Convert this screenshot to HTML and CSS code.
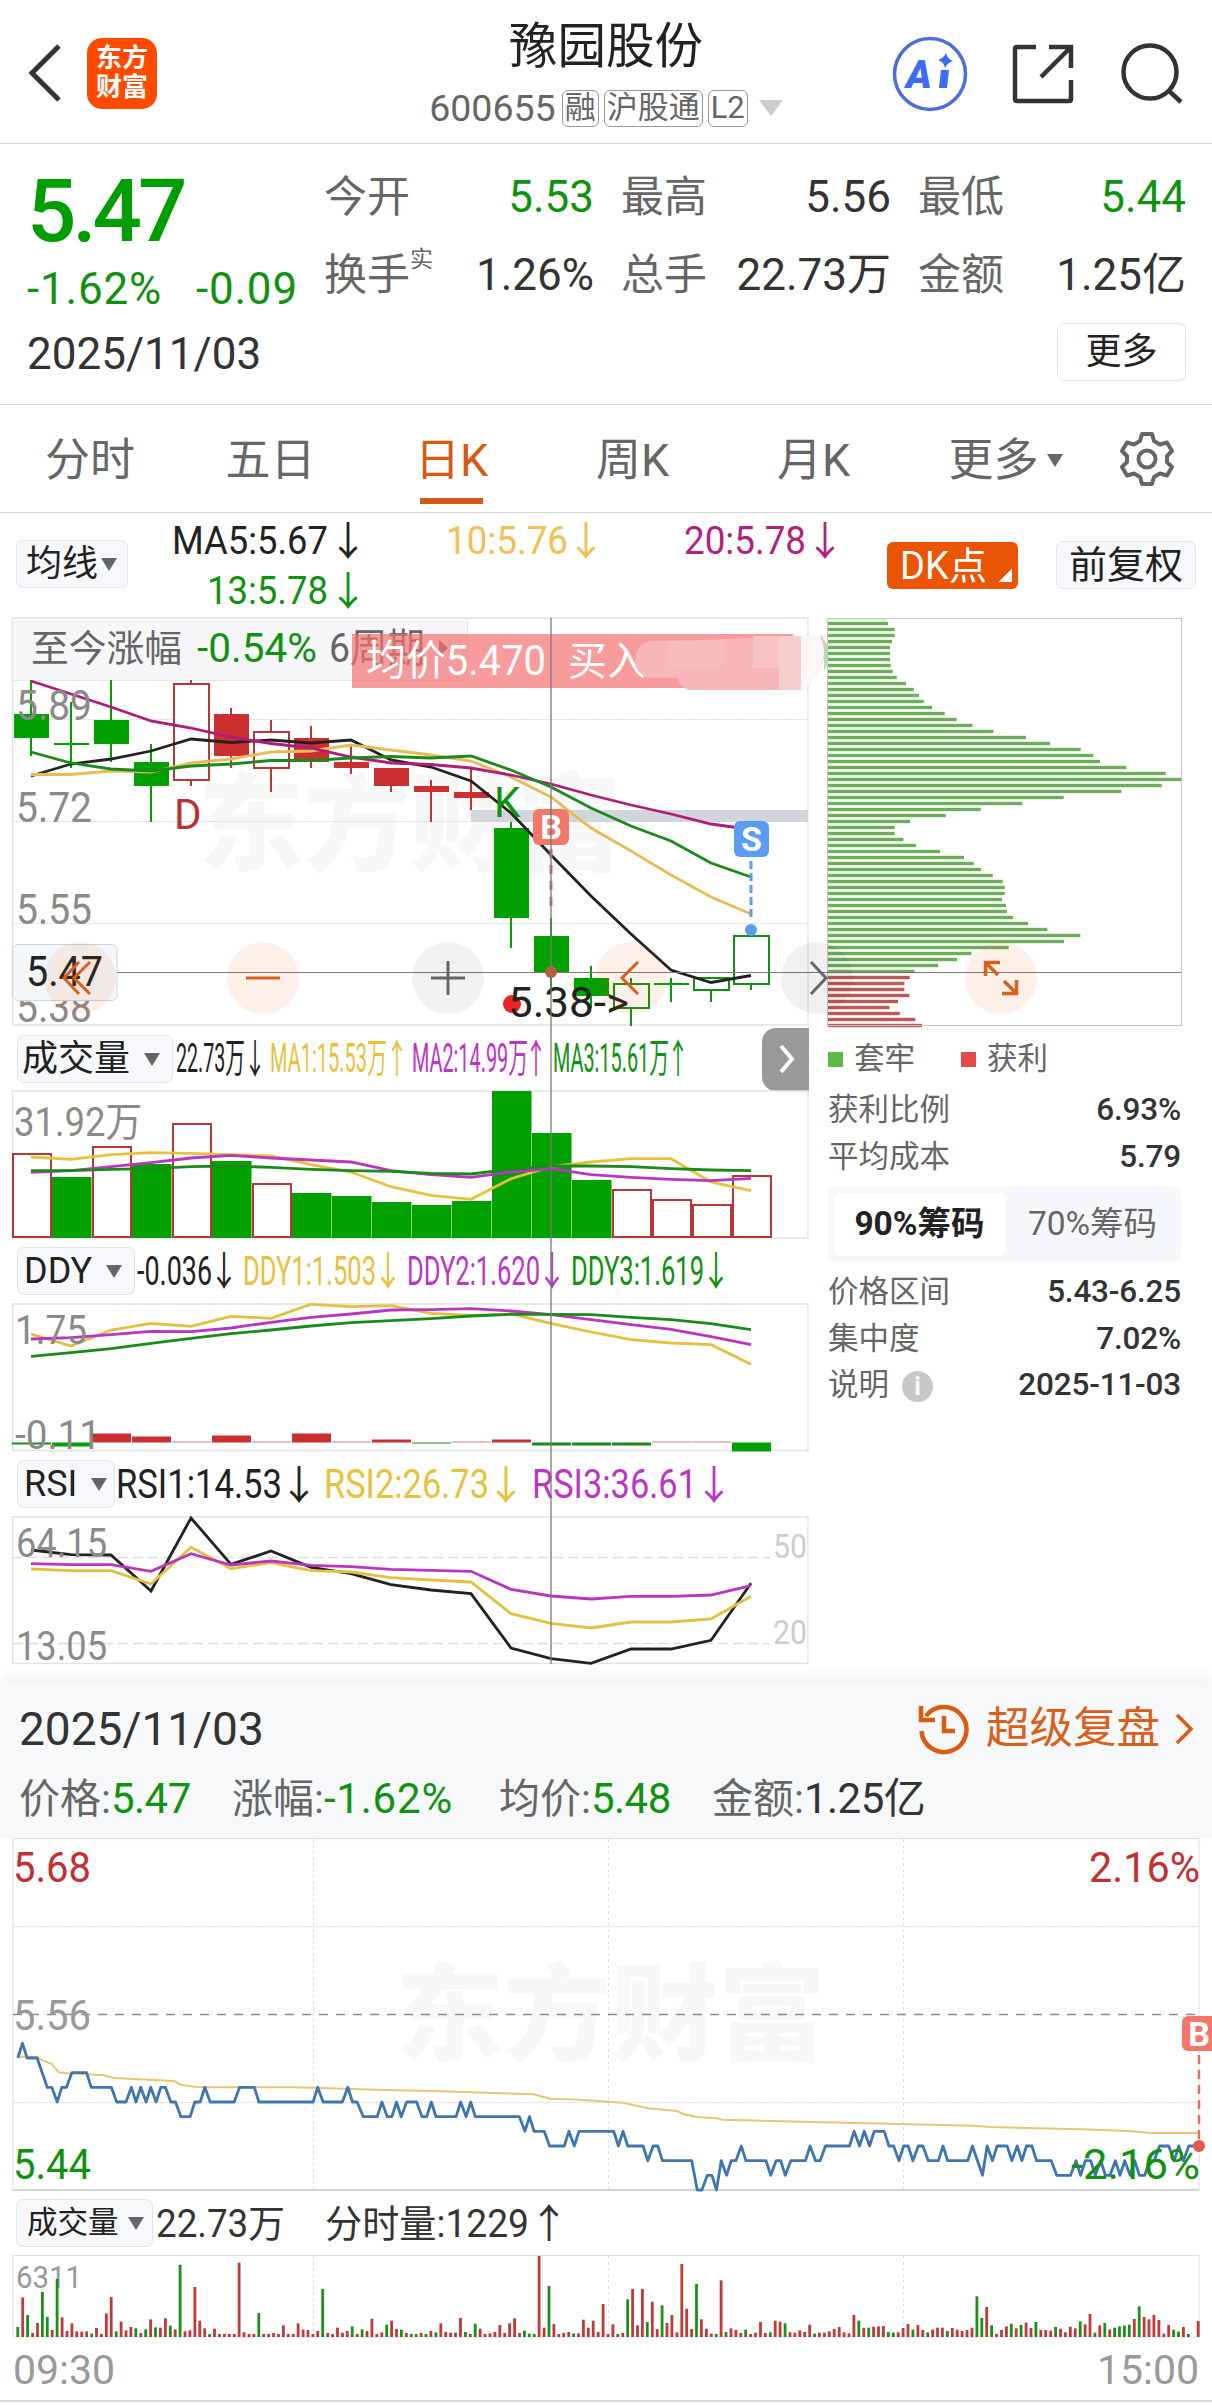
FILE: index.html
```html
<!DOCTYPE html>
<html lang="zh-CN">
<head>
  <meta charset="utf-8">
  <meta name="viewport" content="width=device-width, initial-scale=1">
  <title>豫园股份 600655</title>
  <link rel="stylesheet" href="styles.css">
</head>
<body>

<header class="topbar">
  <div class="topbar-left">
    <svg class="back" width="34" height="58" viewBox="0 0 34 58"><path d="M31 2 L4 29 L31 56" /></svg>
    <div class="logo"><span>东方</span><span>财富</span></div>
  </div>
  <div class="topbar-title">
    <h1>豫园股份</h1>
    <div class="code">
      <span class="num">600655</span>
      <span class="tag">融</span>
      <span class="tag">沪股通</span>
      <span class="tag">L2</span>
      <i class="tri tri-light"></i>
    </div>
  </div>
  <div class="topbar-right">
    <svg width="76" height="76" viewBox="0 0 76 76">
      <circle cx="38" cy="38" r="35.5" fill="none" stroke="#4a6fd8" stroke-width="3.5" />
      <text x="14" y="52" class="ai">A</text>
      <path d="M49 34 h8 l-2 18 h-8 z" fill="#3b6cf6" />
      <path d="M54 17 q1.500 6 7 8 q-6 2 -8 7 q-1 -6 -7 -8 q6 -2 8 -7 z" fill="#3b6cf6" />
    </svg>
    <svg class="line-icon" width="62" height="62" viewBox="0 0 62 62">
      <path d="M24 4 H5 Q3 4 3 6 V56 Q3 58 5 58 H57 Q59 58 59 56 V37 M37 4 H59 V25 M58 5 L29 34" />
    </svg>
    <svg class="line-icon" width="64" height="64" viewBox="0 0 64 64">
      <circle cx="30" cy="30" r="26.500" /><path d="M48 48 L61 60" />
    </svg>
  </div>
</header>

<section class="quote">
  <div class="quote-main">
    <div class="price">5.47</div>
    <div class="change"><span>-1.62%</span><span>-0.09</span></div>
    <div class="date">2025/11/03</div>
  </div>
  <div class="quote-side">
    <div class="quote-grid">
      <div class="cell"><span class="label">今开</span><span class="green">5.53</span></div>
      <div class="cell"><span class="label">最高</span><span>5.56</span></div>
      <div class="cell"><span class="label">最低</span><span class="green">5.44</span></div>
      <div class="cell"><span class="label">换手<sup>实</sup></span><span>1.26%</span></div>
      <div class="cell"><span class="label">总手</span><span>22.73万</span></div>
      <div class="cell"><span class="label">金额</span><span>1.25亿</span></div>
    </div>
    <button class="more">更多</button>
  </div>
</section>

<nav class="tabs">
  <a>分时</a>
  <a>五日</a>
  <a class="active">日K</a>
  <a>周K</a>
  <a>月K</a>
  <a class="tab-more">更多<i class="tri"></i></a>
  <a class="tab-gear">
    <svg width="56" height="56" viewBox="0 0 56 56">
      <path d="M23 3 H33 L35 10 L41 13.500 L48 11.500 L53 20 L48 25 V31 L53 36 L48 44.500 L41 42.500 L35 46 L33 53 H23 L21 46 L15 42.500 L8 44.500 L3 36 L8 31 V25 L3 20 L8 11.500 L15 13.500 L21 10 Z" />
      <circle cx="28" cy="28" r="8.500" />
    </svg>
  </a>
</nav>

<section class="ma-bar">
  <button class="chip-btn ma-btn">均线<i class="tri"></i></button>
  <svg class="ma-values" width="740" height="104" viewBox="130 513 740 104">
    <g class="t39 c-black"><text x="172" y="554" textLength="156">MA5:5.67</text><text class="arr" x="348" y="555">↓</text></g>
    <g class="t39 c-gold"><text x="446" y="554" textLength="122">10:5.76</text><text class="arr" x="586" y="555">↓</text></g>
    <g class="t39 c-plum"><text x="684" y="554" textLength="122">20:5.78</text><text class="arr" x="825" y="555">↓</text></g>
    <g class="t39 c-green"><text x="207" y="604" textLength="121">13:5.78</text><text class="arr" x="348" y="605">↓</text></g>
  </svg>
  <button class="dk-btn">DK点</button>
  <button class="chip-btn fq-btn">前复权</button>
</section>

<main class="charts">
  <svg id="kline" width="1212" height="411" viewBox="0 617 1212 411">
    <text class="watermark" x="198" y="862" textLength="424">东方财富</text>
    <rect class="frame" x="12.500" y="618" width="795.500" height="407" />
    <path class="dots" d="M13 719.500 H808 M13 821.500 H808 M13 923.500 H808" />
    <rect x="12.500" y="618" width="455" height="62.500" fill="#f7f7fa" stroke="#e6e6e8" />
    <text class="t38 c-gray" x="31" y="662" textLength="151">至今涨幅</text>
    <text class="t40 c-green" x="197" y="662" textLength="120">-0.54%</text>
    <text class="t40 c-gray" x="329" y="662" textLength="96">6周期</text>
    <path d="M439 640 L448 648 L439 656 Z" fill="#666" />
    <rect x="471" y="810" width="337" height="12" fill="#d2d6dc" />
    <g id="candles"></g>
    <g id="ma-lines"></g>
    <g class="t42 c-axis">
      <text x="16" y="720" textLength="76">5.89</text>
      <text x="16" y="822" textLength="76">5.72</text>
      <text x="16" y="924" textLength="76">5.55</text>
      <text x="16" y="1022" textLength="76">5.38</text>
    </g>
    <text class="t42" x="174" y="829" fill="#b83232">D</text>
    <text class="t42 c-green" x="494" y="817">K</text>

    <rect x="352" y="634" width="441" height="54" fill="#f47070" fill-opacity=".7" />
    <text class="t42" x="366" y="675" fill="#fff" textLength="180">均价5.470</text>
    <text class="t40" x="568" y="675" fill="#fff" textLength="78">买入</text>
    <path d="M650 641 Q720 640 790 636 H822 Q832 655 812 680 Q806 690 800 690 H690 Q680 688 677 678 H648 Q635 672 635 660 Q636 644 650 641 Z" fill="#f6b6ba" />
    <rect x="668" y="641" width="55" height="27" fill="#f6bbbd" />
    <rect x="753" y="636" width="26" height="32" fill="#f7c2c4" />
    <rect x="779" y="636" width="22" height="54" fill="#f8cdce" />
    <path d="M801 636 H820 Q831 656 812 680 Q806 690 801 690 Z" fill="#fcf6f6" />
    <path d="M824 639 Q834 655 824 671 Z" fill="#b5ddb0" />

    <rect x="13" y="944.500" width="104" height="56" rx="5" fill="#f5f8fb" stroke="#d0d4d8" />
    <text class="t42 c-black" x="26" y="986" textLength="77">5.47</text>

    <g id="chips"></g>
    <rect x="827.500" y="618.500" width="354" height="407" fill="none" stroke="#c8c8c8" />
    <path d="M117 972.500 H1181" stroke="#777" stroke-width="1.200" />

    <path d="M551 849 V906" stroke="#d0776c" stroke-width="3" stroke-dasharray="9 7" />
    <rect x="533" y="809" width="36" height="36" rx="6" fill="#f3776a" />
    <text class="badge" x="551" y="839">B</text>
    <circle cx="551" cy="972" r="6" fill="#bd5a40" />
    <path d="M751 861 V917" stroke="#5b9de8" stroke-width="3" stroke-dasharray="8 4" />
    <rect x="734" y="821" width="35" height="36" rx="6" fill="#5b9df5" />
    <text class="badge" x="751.500" y="851">S</text>
    <circle cx="751" cy="930" r="6" fill="#5b9df5" />
    <circle cx="512" cy="1004" r="9" fill="#ee2424" />
    <text class="t42 c-black" x="508" y="1017" textLength="121">5.38-&gt;</text>

    <!-- zoom and pan controls -->
    <g fill="#ea5504" fill-opacity=".09">
      <circle cx="80" cy="978" r="36" />
      <circle cx="263" cy="978" r="36" />
      <circle cx="631" cy="978" r="36" />
      <circle cx="1001" cy="978" r="36" />
    </g>
    <g fill="#000" fill-opacity=".055">
      <circle cx="448" cy="978" r="36" />
      <circle cx="817" cy="978" r="36" />
    </g>
    <g fill="none" stroke="#d95f1c" stroke-width="3">
      <path d="M79 962 L64 978 L79 994 M90 962 L74 978 L90 994" />
      <path d="M246 978 H280" />
      <path d="M638 962 L622 978 L638 994" />
      <path d="M985.500 976 V962.500 H1000 M986 963 L998 975" stroke-width="3.500" />
      <path d="M1016.500 980 V993.500 H1002 M1016 993 L1004 981" stroke-width="3.500" />
    </g>
    <path d="M431 978 H465 M448 961 V995 M811 962 L826 978 L811 994" fill="none" stroke="#666" stroke-width="3" />
  </svg>

  <div class="lower">
    <div class="indicators">
      <div class="ind-row">
        <button class="chip-btn">成交量<i class="tri"></i></button>
        <svg width="580" height="62" viewBox="175 1028 580 62">
          <g class="t40 c-black"><text x="176" y="1072" textLength="69">22.73万</text><text class="arr" x="255" y="1073" textLength="22">↓</text></g>
          <g class="t40 c-yellow"><text x="270" y="1072" textLength="117">MA1:15.53万</text><text class="arr" x="397" y="1073" textLength="22">↑</text></g>
          <g class="t40 c-magenta"><text x="412" y="1072" textLength="116">MA2:14.99万</text><text class="arr" x="536" y="1073" textLength="22">↑</text></g>
          <g class="t40 c-green"><text x="553" y="1072" textLength="116">MA3:15.61万</text><text class="arr" x="678" y="1073" textLength="22">↑</text></g>
        </svg>
        <button class="next"><svg width="20" height="34" viewBox="0 0 20 34"><path d="M5 4 L16 17 L5 30" /></svg></button>
      </div>
      <svg id="volume" width="820" height="149" viewBox="0 1090 820 149">
        <rect class="frame" x="12.500" y="1091" width="795.500" height="147" />
        <g id="vol-bars"></g>
        <text class="t40 c-axis" x="14" y="1136" textLength="128">31.92万</text>
        <g id="vol-lines"></g>
      </svg>

      <div class="ind-row h64">
        <button class="chip-btn ddy-btn">DDY<i class="tri"></i></button>
        <svg width="600" height="64" viewBox="137 1239 600 64">
          <g class="t40 c-black"><text x="137" y="1285" textLength="75">-0.036</text><text class="arr" x="224" y="1285" textLength="30">↓</text></g>
          <g class="t40 c-yellow"><text x="243" y="1285" textLength="133">DDY1:1.503</text><text class="arr" x="388" y="1285" textLength="30">↓</text></g>
          <g class="t40 c-magenta"><text x="407" y="1285" textLength="133">DDY2:1.620</text><text class="arr" x="552" y="1285" textLength="30">↓</text></g>
          <g class="t40 c-green"><text x="571" y="1285" textLength="133">DDY3:1.619</text><text class="arr" x="716" y="1285" textLength="30">↓</text></g>
        </svg>
      </div>
      <svg id="ddy" width="820" height="149" viewBox="0 1303 820 149">
        <rect class="frame" x="12.500" y="1304" width="795.500" height="146.500" />
        <g id="ddy-bars"></g>
        <g id="ddy-lines"></g>
        <g class="t40 c-axis">
          <text x="15" y="1344" textLength="72">1.75</text>
          <text x="15" y="1449" textLength="86">-0.11</text>
        </g>
      </svg>

      <div class="ind-row h64">
        <button class="chip-btn rsi-btn">RSI<i class="tri"></i></button>
        <svg width="620" height="64" viewBox="117 1452 620 64">
          <g class="t40 c-black"><text x="116" y="1498" textLength="166">RSI1:14.53</text><text class="arr" x="299" y="1499">↓</text></g>
          <g class="t40 c-yellow"><text x="324" y="1498" textLength="165">RSI2:26.73</text><text class="arr" x="506" y="1499">↓</text></g>
          <g class="t40 c-magenta"><text x="532" y="1498" textLength="165">RSI3:36.61</text><text class="arr" x="714" y="1499">↓</text></g>
        </svg>
      </div>
      <svg id="rsi" width="820" height="149" viewBox="0 1516 820 149">
        <rect class="frame" x="12.500" y="1517" width="795.500" height="146.500" />
        <path d="M13 1557.500 H770 M13 1643.500 H770" stroke="#ddd" stroke-width="1.500" stroke-dasharray="10 5" />
        <g id="rsi-lines"></g>
        <g class="t40 c-axis">
          <text x="16" y="1557" textLength="91">64.15</text>
          <text x="16" y="1660" textLength="91">13.05</text>
        </g>
        <g class="t34" fill="#ccc">
          <text x="773" y="1558" textLength="34">50</text>
          <text x="773" y="1644" textLength="34">20</text>
        </g>
      </svg>
    </div>

    <aside class="chips-info">
      <div class="legend">
        <span><i class="sq sq-green"></i>套牢</span>
        <span><i class="sq sq-red"></i>获利</span>
      </div>
      <div class="info-row"><span>获利比例</span><b>6.93%</b></div>
      <div class="info-row"><span>平均成本</span><b>5.79</b></div>
      <div class="segment"><b class="on">90%筹码</b><span>70%筹码</span></div>
      <div class="info-row"><span>价格区间</span><b>5.43-6.25</b></div>
      <div class="info-row"><span>集中度</span><b>7.02%</b></div>
      <div class="info-row"><span>说明<i class="info">i</i></span><b>2025-11-03</b></div>
    </aside>
  </div>
  <div class="crosshair"></div>
</main>

<section class="review">
  <div class="review-head">
    <span class="review-date">2025/11/03</span>
    <a class="replay">
      <svg width="54" height="54" viewBox="0 0 54 54">
        <path d="M9 14 A22.500 22.500 0 1 1 4.500 29" /><path d="M4 4 V18 H18" /><path d="M27 14 V29 H38" />
      </svg>
      <span>超级复盘</span>
      <svg class="arrow" width="22" height="34" viewBox="0 0 22 34"><path d="M4 3 L18 17 L4 31" /></svg>
    </a>
  </div>
  <div class="review-stats">
    <span>价格:<em class="green">5.47</em></span>
    <span>涨幅:<em class="green wide">-1.62%</em></span>
    <span>均价:<em class="green">5.48</em></span>
    <span>金额:<em>1.25亿</em></span>
  </div>
</section>

<svg id="minute" width="1212" height="354" viewBox="0 1838 1212 354">
  <text class="watermark" x="396" y="2052" textLength="430">东方财富</text>
  <rect class="frame thin" x="13" y="1838.500" width="1186" height="351.500" />
  <path class="dots" d="M13 1926.500 H1199 M13 2102.500 H1199" />
  <path class="vdots" d="M313.500 1839 V2190 M608.500 1839 V2190 M903.500 1839 V2190" />
  <path d="M13 2190 H1199" stroke="#d4d4d4" stroke-width="2" />
  <path d="M13 2014.500 H1199" stroke="#8a8a8a" stroke-width="1.500" stroke-dasharray="9 8" />
  <g id="minute-lines"></g>
  <g class="t42">
    <text x="13" y="1882" textLength="78" fill="#c03030">5.68</text>
    <text x="1089" y="1882" textLength="111" fill="#c03030">2.16%</text>
    <text x="13" y="2030" textLength="78" fill="#999">5.56</text>
    <text x="13" y="2179" textLength="78" class="c-green">5.44</text>
    <text x="1071" y="2179" textLength="129" class="c-green">-2.16%</text>
  </g>
  <path d="M1199 2055 V2142" stroke="#dd7060" stroke-width="2.500" stroke-dasharray="9 6" />
  <rect x="1182" y="2016" width="36" height="35" rx="6" fill="#f3776a" />
  <text class="badge" x="1199" y="2046">B</text>
  <circle cx="1199" cy="2146" r="6" fill="#e8584a" />
</svg>

<div class="ind-row minute-row">
  <button class="chip-btn small">成交量<i class="tri"></i></button>
  <svg width="420" height="62" viewBox="155 2192 420 62">
    <g class="t39 c-dark">
      <text x="156" y="2237" textLength="129">22.73万</text>
      <text x="325" y="2237" textLength="204">分时量:1229</text>
      <text class="arr" x="549" y="2238">↑</text>
    </g>
  </svg>
</div>

<svg id="minute-vol" width="1212" height="84" viewBox="0 2254 1212 84">
  <rect class="frame thin" x="13" y="2255.500" width="1186" height="81.500" />
  <path class="vdots" d="M313.500 2256 V2337 M608.500 2256 V2337 M903.500 2256 V2337" />
  <text class="t31" x="16" y="2288" textLength="66" fill="#999">6311</text>
  <g id="minute-bars"></g>
</svg>

<footer class="time-axis"><span>09:30</span><span>15:00</span></footer>

<script src="script.js"></script>
</body>
</html>
```
FILE: styles.css
```css
* {
  box-sizing: border-box;
}
body {
  margin: 0;
  width: 1212px;
  height: 2405px;
  overflow: hidden;
  background: #fff;
  color: #333;
  font-family: Roboto, "Liberation Sans", "Noto Sans CJK SC", sans-serif;
}
svg {
  display: block;
  flex: none;
}
button {
  margin: 0;
  padding: 0;
  font-family: inherit;
  color: #222;
}
i, em {
  font-style: normal;
}
.green {
  color: #109210;
}
.tri {
  display: inline-block;
  border: 8px solid transparent;
  border-top: 13px solid #666;
  border-bottom: 0;
}
.tri-light {
  border-width: 16px 12px 0;
  border-top-color: #ccc;
}



.topbar {
  display: grid;
  grid-template-columns: 400px 1fr 400px;
  height: 144px;
  border-bottom: 1px solid #d8d8d8;
}
.topbar-left {
  display: flex;
  align-items: center;
  padding: 3px 0 0 28px;
}
.back {
  fill: none;
  stroke: #333;
  stroke-width: 5;
}
.logo {
  display: flex;
  flex-direction: column;
  align-items: center;
  justify-content: center;
  width: 70px;
  height: 71px;
  margin-left: 25px;
  border-radius: 15px;
  background: #ff4a00;
  color: #fff;
  font-size: 26px;
  font-weight: 700;
  line-height: 29px;
}
.topbar-title {
  text-align: center;
}
.topbar-title h1 {
  margin: 17px 0 0;
  font-size: 48.500px;
  font-weight: 400;
  line-height: 60px;
  color: #222;
}
.code {
  display: flex;
  align-items: center;
  justify-content: center;
  gap: 5px;
  height: 38px;
  margin-top: 12px;
  color: #666;
}
.code .num {
  font-size: 37.500px;
  margin-right: 1px;
}
.tag {
  height: 37px;
  padding: 0 2px;
  border: 1.500px solid #999;
  border-radius: 6px;
  font-size: 31px;
  line-height: 34px;
}
.code .tri {
  margin-left: 6px;
}
.topbar-right {
  display: flex;
  align-items: center;
  padding: 4px 0 0 80px;
}
.topbar-right svg + svg {
  margin-left: 44px;
}
.topbar-right svg + svg + svg {
  margin-left: 46px;
}
.line-icon {
  fill: none;
  stroke: #333;
  stroke-width: 4.500;
}
.ai {
  font-size: 39px;
  font-weight: 900;
  font-style: italic;
  fill: #3b6cf6;
}



.quote {
  display: flex;
  height: 261px;
  border-bottom: 1px solid #d8d8d8;
  font-size: 44px;
}
.quote-main {
  width: 324px;
  padding: 18px 0 0 27px;
}
.price {
  line-height: 98px;
  font-size: 87px;
  font-weight: 500;
  letter-spacing: -4px;
  color: #009e00;
}
.change {
  display: flex;
  gap: 34px;
  line-height: 58px;
  letter-spacing: .8px;
  color: #109210;
}
.date {
  line-height: 72px;
}
.quote-side {
  display: flex;
  flex-direction: column;
  align-items: flex-end;
  width: 862px;
  padding-top: 14px;
}
.quote-grid {
  display: grid;
  grid-template-columns: 270px 270px 268px;
  column-gap: 27px;
  width: 862px;
}
.cell {
  display: flex;
  justify-content: space-between;
  line-height: 78px;
  white-space: nowrap;
}
.cell .label {
  font-size: 43px;
  color: #666;
}
.cell sup {
  font-size: 23px;
  line-height: 1;
  vertical-align: 23px;
}
.more {
  width: 129px;
  height: 58px;
  margin-top: 9px;
  border: 1.500px solid #e4e4e4;
  border-radius: 7px;
  background: #fff;
  font-size: 36px;
  line-height: 50px;
}



.tabs {
  display: flex;
  height: 108px;
  border-bottom: 1px solid #d4d4d4;
  font-size: 45px;
  line-height: 111px;
  color: #666;
}
.tabs a {
  width: 181px;
  text-align: center;
}
.tabs a:first-child {
  width: 180px;
}
.tabs a.active {
  color: #d75a14;
  background: linear-gradient(#d75a14, #d75a14) 59px 93px / 63px 6px no-repeat;
}
.tabs a.tab-more {
  width: 203px;
}
.tab-more .tri {
  margin: 0 0 9px 8px;
}
.tabs a.tab-gear {
  width: 80px;
  padding: 26px 0 0 12px;
}
.tab-gear svg {
  fill: none;
  stroke: #666;
  stroke-width: 4;
  stroke-linejoin: round;
}



.ma-bar {
  display: flex;
  height: 104px;
  padding-left: 16px;
}
.chip-btn {
  display: flex;
  align-items: center;
  height: 48px;
  padding: 0 8px 0 4px;
  border: 1.500px solid #e2e4e8;
  border-radius: 7px;
  background: #f6f8fb;
  font-size: 36px;
  line-height: 44px;
  white-space: nowrap;
}
.ma-btn {
  width: 112px;
  margin-top: 27px;
  padding-left: 9px;
}
.ma-btn .tri {
  margin-left: 3px;
}
.ma-values {
  margin-left: 2px;
}
.dk-btn {
  width: 131px;
  height: 47px;
  margin: 29px 0 0 17px;
  padding-right: 18px;
  border: 0;
  border-radius: 6px;
  background: linear-gradient(135deg, transparent 50%, #fff 50%) 112px 27px / 13px 13px no-repeat #ea5504;
  color: #fff;
  font-size: 38px;
  line-height: 44px;
}
.fq-btn {
  width: 140px;
  margin: 28px 0 0 38px;
  padding: 0 0 0 12px;
  font-size: 38px;
}



/* svg text */
.t31 { font-size: 31px; }
.t34 { font-size: 34px; }
.t38 { font-size: 37px; }
.t39 { font-size: 38px; }
.t40 { font-size: 40px; }
.t42 { font-size: 42px; }
.c-black { fill: #222; }
.c-dark { fill: #333; }
.c-gray { fill: #666; }
.c-axis { fill: #8a8a8a; }
.c-green { fill: #109210; }
.c-gold { fill: #efc052; }
.c-plum { fill: #b3207a; }
.c-yellow { fill: #e6c23c; }
.c-magenta { fill: #bc36c4; }
.arr {
  font-family: "Noto Sans CJK SC", sans-serif;
  font-size: 40px;
  text-anchor: middle;
}
.watermark {
  font-size: 106px;
  font-weight: 900;
  fill: #f7f7f7;
}
.badge {
  font-size: 34px;
  font-weight: 700;
  fill: #fff;
  text-anchor: middle;
}
.frame {
  fill: none;
  stroke: #e2e2e4;
  stroke-width: 1.500;
}
.frame.thin {
  stroke: #dcdee2;
  stroke-width: 1;
}
.dots {
  fill: none;
  stroke: #ddd;
  stroke-dasharray: 2 1;
}
.vdots {
  fill: none;
  stroke: #ddd;
  stroke-dasharray: 3 3;
}



.charts {
  position: relative;
  height: 1065px;
}
.crosshair {
  position: absolute;
  left: 550px;
  top: 1px;
  width: 2px;
  height: 1046px;
  background: rgba(120, 120, 120, .65);
}
.lower {
  display: flex;
}
.indicators {
  width: 820px;
}
.ind-row {
  display: flex;
  align-items: center;
  height: 62px;
  padding-left: 17px;
}
.ind-row.h64 {
  height: 64px;
}
.ind-row .chip-btn {
  flex: none;
  width: 156px;
  margin-right: 2px;
}
.ind-row .ddy-btn {
  width: 118px;
  padding-left: 6px;
}
.ind-row .rsi-btn {
  width: 98px;
  padding-left: 6px;
}
.ind-row .tri {
  margin-left: 14px;
}
.next {
  display: flex;
  align-items: center;
  justify-content: center;
  width: 47px;
  height: 63px;
  margin-left: 7px;
  border: 0;
  border-radius: 14px 0 0 14px;
  background: #999;
}
.next path {
  fill: none;
  stroke: #fff;
  stroke-width: 4;
}
.chips-info {
  width: 353px;
  margin-left: 8px;
  font-size: 30.500px;
  color: #666;
}
.legend {
  display: flex;
  height: 59px;
  padding-top: 3px;
  line-height: 58px;
}
.legend span {
  display: flex;
  align-items: center;
  width: 133px;
}
.sq {
  width: 15px;
  height: 15px;
  margin-right: 11px;
}
.sq-green { background: #5cb947; }
.sq-red { background: #e54a4a; }
.info-row {
  display: flex;
  justify-content: space-between;
  height: 46.500px;
  line-height: 46.500px;
}
.info-row b {
  font-weight: 500;
  font-size: 31.500px;
  letter-spacing: -.2px;
  color: #333;
}
.info {
  display: inline-block;
  width: 31px;
  height: 31px;
  margin-left: 13px;
  border-radius: 50%;
  background: #c8c8c8;
  color: #fff;
  font-size: 25px;
  font-weight: 700;
  line-height: 31px;
  text-align: center;
}
.segment {
  display: flex;
  height: 75px;
  margin: 7px 0 7px;
  padding: 6px;
  border-radius: 6px;
  background: #f6f7fa;
  font-size: 33.500px;
  line-height: 62px;
  text-align: center;
}
.segment b {
  width: 171px;
  border-radius: 6px;
  background: #fff;
  color: #222;
}
.segment span {
  flex: 1;
  padding-left: 5px;
}



.review {
  height: 156px;
  padding: 17px 17px 0 19px;
  background: #f7f8fa;
  box-shadow: 0 -6px 14px rgba(0, 0, 0, .06);
}
.review-head {
  display: flex;
  justify-content: space-between;
  height: 60px;
  line-height: 60px;
  font-size: 46px;
}
.replay {
  display: flex;
  align-items: center;
  font-size: 43.500px;
  color: #d8601c;
}
.replay span {
  margin: 0 13px 0 15px;
}
.replay svg {
  fill: none;
  stroke: #dc5a14;
  stroke-width: 4.500;
}
.replay .arrow {
  stroke-width: 3.500;
}
.review-stats {
  display: grid;
  grid-template-columns: 213px 267px 213px auto;
  line-height: 80px;
  font-size: 41px;
  color: #666;
}
.review-stats em {
  font-size: 42px;
  letter-spacing: -.5px;
  color: #333;
}
.review-stats em.green {
  color: #109210;
}
.review-stats em.wide {
  letter-spacing: .8px;
}
.ind-row .small {
  width: 137px;
  padding: 0 0 0 10px;
  font-size: 30.500px;
}
.minute-row {
  padding-left: 16px;
}
.minute-row .tri {
  margin-left: 9px;
}
.time-axis {
  display: flex;
  justify-content: space-between;
  height: 64px;
  padding: 0 13px;
  border-bottom: 2px solid #d8dcde;
  color: #999;
  font-size: 41px;
  line-height: 64px;
}
```
FILE: script.js
```js
const NS = "http://www.w3.org/2000/svg";
const RED = "#cc2f2f", GREEN = "#00a000";

// add a shape to a group
function add(id, tag, attrs) {
  const el = document.createElementNS(NS, tag);
  for (const k in attrs) el.setAttribute(k, attrs[k]);
  document.getElementById(id).append(el);
}

function rect(id, x, y, w, h, fill) {
  add(id, "rect", { x: x, y: y, width: w, height: h, fill: fill });
}

function hollow(id, x, y, w, h, stroke) {
  add(id, "rect", { x: x + 1, y: y + 1, width: w - 2, height: h - 2, fill: "#fff", stroke: stroke, "stroke-width": 2 });
}

// one point every 40px, y = top + v / scale
function line(id, values, color, top, scale) {
  const pts = values.map((v, i) => (31 + i * 40) + "," + (top + v / scale).toFixed(1)).join(" ");
  add(id, "polyline", { points: pts, fill: "none", stroke: color, "stroke-width": 2.8 });
}

// squeeze the svg labels to their column
document.querySelectorAll("text[textLength]").forEach(t => t.setAttribute("lengthAdjust", "spacingAndGlyphs"));

// candles: color, filled, body top, body bottom, wick top, wick bottom
const candles = [
  ["g", 1, 714, 738, 680, 756], ["g", 1, 743, 745, 702, 768], ["g", 1, 720, 744, 680, 762],
  ["g", 1, 762, 786, 744, 822], ["r", 0, 683, 781, 680, 786], ["r", 1, 714, 756, 708, 768],
  ["r", 0, 731, 769, 720, 792], ["r", 1, 738, 762, 726, 768], ["r", 1, 762, 768, 744, 774],
  ["r", 1, 768, 786, 768, 792], ["r", 1, 786, 792, 780, 822], ["r", 1, 792, 798, 768, 810],
  ["g", 1, 828, 918, 822, 948], ["g", 1, 936, 972, 918, 990], ["g", 1, 978, 996, 966, 1008],
  ["g", 0, 983, 1009, 978, 1026], ["g", 1, 983, 985, 978, 1002], ["g", 0, 977, 991, 977, 1002],
  ["g", 0, 935, 985, 931, 990]
];
candles.forEach((c, i) => {
  const x = 31 + i * 40;
  const color = c[0] == "g" ? (c[1] ? GREEN : "#109210") : (c[1] ? RED : "#b83838");
  rect("candles", x - 1, c[4], 2, c[5] - c[4], color);
  if (c[1]) rect("candles", x - 17, c[2], 35, c[3] - c[2], color);
  else hollow("candles", x - 18, c[2], 37, c[3] - c[2], color);
});
line("ma-lines", [776, 764, 759, 751, 739, 742.5, 740, 743, 740, 760, 767, 781, 813, 855, 896, 934, 970, 982.5, 975.5], "#222", 0, 1);
line("ma-lines", [774.5, 774.5, 771, 772, 763, 759, 752, 751, 745, 750, 755, 761, 777, 797, 828, 851, 875, 897, 914], "#e8bc55", 0, 1);
line("ma-lines", [681, 694, 707, 721, 728, 737, 743.5, 748, 757, 763, 764.5, 768, 775, 784, 795, 805, 814, 824, 829.5], "#b01c78", 0, 1);
line("ma-lines", [752, 763, 769, 771, 766, 764, 760.5, 760.5, 758, 756.5, 758, 756, 770, 787, 808, 826, 841, 863, 877], "#1a8a1a", 0, 1);

// chip distribution, last nine rows are in profit
const chips = [228, 234, 254, 254, 246, 240, 240, 240, 242, 248, 260, 288, 311, 327, 341, 366, 404, 440, 487, 550,
  648, 720, 812, 850, 870, 949, 1067, 1113, 1055, 934, 761, 637, 512, 407, 300, 254, 254, 280, 318, 390, 462, 491,
  513, 548, 578, 584, 584, 576, 588, 590, 609, 654, 712, 811, 762, 596, 484, 441, 384, 313,
  299, 283, 283, 298, 264, 238, 269, 316, 336];
chips.forEach((v, i) => {
  const y = 616 + i * 6, w = (v - 54) / 3;
  rect("chips", 828, Math.max(618, y - 1), w, 5, i < 60 ? "#ddf6d4" : "#fddcdc");
  rect("chips", 828, Math.max(618, y), w, i ? 3 : 1, i < 60 ? "#70ab62" : "#b95a5a");
});

// volume
const vol = "r1153 g1177 r1146 g1164 r1123 g1161 r1183 g1193 g1196 g1202 g1205 g1201 g1091 g1133 g1180 r1189 r1199 r1204 r1175";
vol.split(" ").forEach((s, i) => {
  const y = +s.slice(1), x = 12 + i * 40;
  if (s[0] == "g") rect("vol-bars", x, y, 39.5, 1238 - y, GREEN);
  else hollow("vol-bars", x, y, 40, 1238 - y, "#b83838");
});
line("vol-lines", [411, 418, 404, 398, 400, 404, 408, 434, 456, 500, 526, 538, 476, 440, 426, 416, 416, 486, 512], "#e6c23c", 1020, 3);
line("vol-lines", [457, 452, 440, 428, 414, 406, 414, 420, 426, 452, 464, 472, 456, 446, 464, 472, 478, 482, 475], "#b836c0", 1020, 3);
line("vol-lines", [452, 452, 448, 446, 440, 438, 442, 448, 452, 454, 460, 462, 448, 438, 438, 440, 446, 450, 452], "#1a8a1a", 1020, 3);

// ddy, bars grow up (red) or down (green) from the zero line
const ddy = [-2, -4, 9, 6, 1, 7, 1, 9, 1, 3, -1, 1, 3, -3, -3, -3, 1, 1, -9];
ddy.forEach((v, i) => {
  if (v > 0) rect("ddy-bars", 12 + i * 40, 1442.5 - v, 39, v, v > 1 ? RED : "#c98080");
  else rect("ddy-bars", 12 + i * 40, 1442.5, 39, -v, v < -3 ? GREEN : "#1a8a1a");
});
line("ddy-lines", [282, 318, 270, 250, 259, 229, 235, 193, 200, 197, 220, 226, 222, 250, 276, 299, 309, 314, 373], "#e2c040", 1240, 3);
line("ddy-lines", [297, 293, 284, 274, 275, 264, 247, 232, 222, 210, 209, 206, 213, 224, 239, 254, 268, 290, 314], "#b836c0", 1240, 3);
line("ddy-lines", [349, 338, 326, 310, 295, 281, 270, 258, 248, 242, 236, 228, 223, 223, 224, 232, 239, 251, 269], "#1a8a1a", 1240, 3);

// rsi
line("rsi-lines", [300, 314, 315, 423, 204, 343, 303, 352, 371, 404, 420, 431, 594, 626, 640, 597, 597, 571, 400], "#222", 1450, 3);
line("rsi-lines", [357, 362, 362, 402, 292, 356, 338, 362, 366, 383, 390, 396, 491, 520, 534, 516, 516, 507, 439], "#e2c040", 1450, 3);
line("rsi-lines", [341, 344, 344, 364, 311, 345, 333, 346, 350, 358, 361, 364, 418, 438, 447, 439, 439, 435, 407], "#b836c0", 1450, 3);

// minute chart
const SX = 1.2937;
const avg = "23,680 48,680 56,692 67,702 76,727 86,730 134,736 147,744 225,753 234,764 252,770 264,772 380,772 500,780 560,783 690,793 712,806 750,809 806,818 838,835 876,843 884,852 904,862 925,864 935,869 1010,874 1260,887 1280,891 1400,898 1460,903 1490,909 1550,909";
add("minute-lines", "polyline", {
  points: avg.split(" ").map(p => p.split(",")).map(p => (p[0] / SX).toFixed(1) + "," + (1830 + p[1] / 3).toFixed(1)).join(" "),
  fill: "none", stroke: "#e6c673", "stroke-width": 2
});
// x and price in cents above 5.44
const price = "23,9 29,10 35,9 48,9 61,7 67,7 74,6 80,7 86,7 93,8 112,8 118,7 144,7 151,6 163,6 170,7 176,6 182,7 189,6 195,7 202,6 208,7 214,7 221,6 227,6 234,5 246,5 252,6 259,6 265,7 272,6 303,6 310,7 329,7 335,6 405,6 411,7 418,6 443,6 450,7 456,6 462,6 470,5 488,5 494,6 501,5 507,5 513,6 519,5 526,6 539,6 546,5 552,5 558,6 564,5 590,5 596,6 603,5 609,6 615,5 672,5 679,4 685,5 691,4 704,4 711,3 730,3 736,4 743,3 749,4 794,4 800,3 806,4 812,3 832,3 838,2 845,3 851,3 857,2 895,2 902,0 908,0 915,1 921,1 927,0 933,2 940,1 946,2 952,2 959,3 965,2 991,2 997,1 1004,2 1010,2 1016,1 1023,2 1042,2 1048,3 1055,2 1061,2 1068,3 1099,3 1105,4 1112,3 1118,4 1125,3 1131,4 1144,4 1150,3 1156,3 1163,2 1169,3 1175,3 1181,2 1188,3 1194,3 1201,2 1214,2 1220,3 1226,2 1252,2 1258,3 1271,1 1277,3 1284,2 1290,3 1303,3 1309,2 1316,3 1322,2 1328,3 1335,3 1341,2 1360,2 1367,1 1385,1 1392,2 1398,1 1404,2 1411,2 1417,1 1424,2 1430,1 1436,1 1443,2 1449,1 1455,2 1462,1 1468,2 1474,1 1481,1 1487,2 1493,2 1500,3 1512,3 1519,2 1525,3 1531,2 1538,3 1550,3";
add("minute-lines", "polyline", {
  points: price.split(" ").map(p => p.split(",")).map(p => (p[0] / SX).toFixed(1) + "," + (2190 - p[1] * 14.67).toFixed(1)).join(" "),
  fill: "none", stroke: "#3f76ae", "stroke-width": 2.8, "stroke-linejoin": "round"
});

const mv = ("g30 r119 g66 r12 r42 g135 g60 r21 g174 r59 r18 r41 r17 r16 r17 g10 r27 r9 r71 r120 g17 r46 r20 r30 g26 r12 g23 r53 g29 r28 r56 g34 r23 g217 r17 r20 r150 r49 r26 g9 r25 r9 r9 r9 r9 r223 r14 r9 r9 g72 r9 r9 r12 r9 r35 r9 r9 r41 r22 r21 " +
  "r9 r18 g144 r12 r9 r28 r13 r18 g32 r9 g23 r18 r55 r9 r14 g37 r49 r24 g22 r12 g9 g9 r12 g9 r18 g14 r41 r15 r13 r13 r57 g15 r9 g40 r25 r9 r11 r15 r36 r12 r41 r56 r12 g19 g10 g9 r243 r28 g153 r39 r9 r12 r15 g11 r11 r52 r28 r49 r15 r99 r9 " +
  "r38 g9 r12 g113 r144 r35 r144 g45 r106 r24 g95 r42 r66 r14 r219 r85 r24 g159 r53 r25 r10 g9 r170 g15 r26 r21 r12 g22 r9 r13 r45 r12 g14 r49 r46 g41 r14 r13 r20 r15 r37 g10 r13 r13 r17 r24 r30 r14 r11 r66 g49 r27 g28 r31 r32 r33 g15 g13 r14 r27 " +
  "r39 g22 r36 r21 g14 r22 r28 r28 g18 r27 r22 r18 r21 r28 g122 g57 r90 g35 r9 r21 r32 g40 r26 g36 r43 r27 g45 r21 r21 r19 g30 r25 r14 r31 r26 g47 r38 r69 g13 r35 g42 r23 g28 g32 g34 g37 r54 g92 r60 r53 r66 r51 r10 r36 g22 g16 r30 g9 r0 r48").split(" ");
mv.forEach((s, i) => {
  const h = s.slice(1) / 3;
  rect("minute-bars", (16.4 + i * 1180.4 / (mv.length - 1)).toFixed(1), 2337 - h, 2.8, h, s[0] == "g" ? "#1a8f1a" : "#c03a3a");
});
```
